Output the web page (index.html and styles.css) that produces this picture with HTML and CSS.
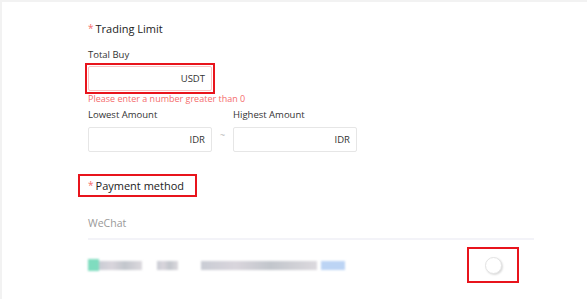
FILE: index.html
```html
<!DOCTYPE html>
<html lang="en">
<head>
    <meta charset="UTF-8">
    <title>Trading Limit</title>
    <link rel="stylesheet" href="styles.css">
</head>
<body>
    <div class="page">
        <div class="form">
            <!-- Trading limit -->
            <div class="title"><span class="req">*</span>Trading Limit</div>

            <div class="label first">Total Buy</div>
            <div class="mark box-mark">
                <div class="input error"><span class="unit">USDT</span></div>
            </div>
            <div class="err-text">Please enter a number greater than 0</div>

            <div class="range">
                <div class="field">
                    <div class="label">Lowest Amount</div>
                    <div class="input"><span class="unit">IDR</span></div>
                </div>
                <div class="tilde">~</div>
                <div class="field">
                    <div class="label">Highest Amount</div>
                    <div class="input"><span class="unit">IDR</span></div>
                </div>
            </div>

            <!-- Payment method -->
            <div class="title pay mark"><span class="req">*</span>Payment method</div>

            <div class="method">WeChat</div>
            <div class="divider"></div>

            <div class="account">
                <div class="blur-line">
                    <span class="b b-icon"></span>
                    <span class="b w43"></span>
                    <span class="gap g15"></span>
                    <span class="b w21"></span>
                    <span class="gap g23"></span>
                    <span class="b w116"></span>
                    <span class="b blue"></span>
                </div>
                <div class="toggle-wrap mark">
                    <span class="toggle"></span>
                </div>
            </div>
        </div>
    </div>
</body>
</html>
```

FILE: styles.css
```css
body {
    margin: 0;
    background: #fff;
    font-family: 'Open Sans', 'Noto Sans', sans-serif;
    color: #333;
}
.page {
    border-top: 2px solid #f2f2f2;
    border-left: 2px solid #f2f2f2;
    height: 299px;
    box-sizing: border-box;
}
.form {
    padding: 17px 0 0 86px;
    width: 446px;
}
.title {
    font-size: 11px;
    line-height: 18px;
    color: #222;
}
.req {
    color: #f56c6c;
    margin-right: 2px;
    font-size: 10px;
    vertical-align: 1px;
}
.label {
    font-size: 9.5px;
    line-height: 14px;
    margin-top: 8px;
    color: #333;
}
.label.first {
    margin-top: 10px;
}
.input {
    width: 124px;
    height: 25px;
    box-sizing: border-box;
    border: 1px solid #e6e6e6;
    border-radius: 2px;
    display: flex;
    align-items: center;
    justify-content: flex-end;
    padding-right: 6px;
    margin-top: 5px;
}
.box-mark {
    width: fit-content;
    margin-top: 4px;
}
.box-mark .input {
    margin-top: 0;
}
.input.error {
    border-color: #fbc4c4;
}
.unit {
    font-size: 9.5px;
    color: #333;
}
.mark {
    outline: 2px solid #e8141c;
    outline-offset: 1px;
}
.err-text {
    font-size: 9px;
    line-height: 12px;
    color: #f56c6c;
    margin-top: 2px;
}
.range {
    display: flex;
    align-items: flex-end;
}
.range .label {
    margin-top: 3px;
}
.tilde {
    width: 21px;
    text-align: center;
    font-size: 9px;
    color: #bbb;
    margin-bottom: 11px;
}
.title.pay {
    display: inline-block;
    margin-top: 25px;
    line-height: 16px;
    padding: 0 10px 0 7px;
    margin-left: -7px;
}
.method {
    font-size: 10.5px;
    color: #999;
    margin-top: 20px;
    line-height: 16px;
}
.divider {
    height: 2px;
    background: #f3f3f8;
    margin-top: 7px;
    width: 446px;
}
.account {
    display: flex;
    align-items: center;
    justify-content: space-between;
    margin-top: 10px;
    padding-right: 18px;
}
.blur-line {
    display: flex;
    align-items: center;
    filter: blur(0.8px);
}
.b {
    display: inline-block;
    height: 9px;
    background: linear-gradient(90deg, #c9ccd4, #d9d5dc 30%, #c2c6cc 60%, #dcd9de);
}
.b-icon {
    width: 11px;
    height: 12px;
    background: #7fdcbf;
}
.w43 { width: 43px; }
.w21 { width: 21px; }
.w116 { width: 116px; }
.gap { display: inline-block; }
.g15 { width: 15px; }
.g23 { width: 23px; }
.blue {
    width: 24px;
    background: #bcd4f4;
    margin-left: 4px;
}
.toggle-wrap {
    width: 46px;
    height: 30px;
    display: flex;
    align-items: center;
    justify-content: center;
}
.toggle {
    width: 15px;
    height: 15px;
    border-radius: 50%;
    background: #fff;
    border: 1px solid #e4e4e4;
    box-shadow: 1px 1px 2px rgba(0, 0, 0, 0.15);
}
```
